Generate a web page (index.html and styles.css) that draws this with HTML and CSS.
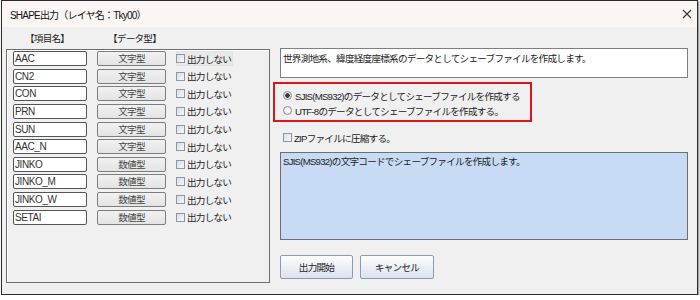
FILE: index.html
```html
<!DOCTYPE html>
<html lang="ja">
  <head>
    <meta charset="UTF-8" />
    <title>SHAPE出力</title>
    <link rel="stylesheet" href="styles.css">
  </head>
  <body>
    <div class="dialog">
      <div class="titlebar">
        <span class="title">SHAPE出力（レイヤ名：Tky00）</span>
        <svg class="close" width="10" height="10" viewBox="0 0 10 10">
          <path d="M1 1 L9 9 M9 1 L1 9" stroke="#333" stroke-width="1.1" fill="none" />
        </svg>
      </div>

      <div class="body">
        <div class="left">
          <div class="heads">
            <span class="head-name">【項目名】</span>
            <span class="head-type">【データ型】</span>
          </div>
          <div class="panel">
            <div class="row">
              <div class="field">AAC</div>
              <div class="type">文字型</div>
              <label class="check focus"><span class="box"></span>出力しない</label>
            </div>
            <div class="row">
              <div class="field">CN2</div>
              <div class="type">文字型</div>
              <label class="check"><span class="box"></span>出力しない</label>
            </div>
            <div class="row">
              <div class="field">CON</div>
              <div class="type">文字型</div>
              <label class="check"><span class="box"></span>出力しない</label>
            </div>
            <div class="row">
              <div class="field">PRN</div>
              <div class="type">文字型</div>
              <label class="check"><span class="box"></span>出力しない</label>
            </div>
            <div class="row">
              <div class="field">SUN</div>
              <div class="type">文字型</div>
              <label class="check"><span class="box"></span>出力しない</label>
            </div>
            <div class="row">
              <div class="field">AAC_N</div>
              <div class="type">文字型</div>
              <label class="check"><span class="box"></span>出力しない</label>
            </div>
            <div class="row">
              <div class="field">JINKO</div>
              <div class="type">数値型</div>
              <label class="check"><span class="box"></span>出力しない</label>
            </div>
            <div class="row">
              <div class="field">JINKO_M</div>
              <div class="type">数値型</div>
              <label class="check"><span class="box"></span>出力しない</label>
            </div>
            <div class="row">
              <div class="field">JINKO_W</div>
              <div class="type">数値型</div>
              <label class="check"><span class="box"></span>出力しない</label>
            </div>
            <div class="row">
              <div class="field">SETAI</div>
              <div class="type">数値型</div>
              <label class="check"><span class="box"></span>出力しない</label>
            </div>
          </div>
        </div>

        <div class="right">
          <div class="desc">世界測地系、緯度経度座標系のデータとしてシェーブファイルを作成します。</div>
          <div class="encoding">
            <label class="radio"><span class="dot checked"></span>SJIS(MS932)のデータとしてシェーブファイルを作成する</label>
            <label class="radio"><span class="dot"></span>UTF-8のデータとしてシェーブファイルを作成する。</label>
          </div>
          <label class="check zip"><span class="box"></span>ZIPファイルに圧縮する。</label>
          <div class="info">SJIS(MS932)の文字コードでシェーブファイルを作成します。</div>
          <div class="buttons">
            <button class="btn start">出力開始</button>
            <button class="btn cancel">キャンセル</button>
          </div>
        </div>
      </div>
    </div>
  </body>
</html>
```

FILE: styles.css
```css
body {
  margin: 0;
  background-color: #ffffff;
  font-family: "Liberation Sans", "Noto Sans CJK JP", sans-serif;
  font-size: 9.6px;
  letter-spacing: -0.75px;
  color: #222;
}
.dialog {
  box-sizing: border-box;
  width: 697px;
  height: 295px;
  margin-left: 1px;
  border: 1px solid #2b2b2b;
  background-color: #f0f0f0;
  box-shadow: 1px 1px 2px rgba(0, 0, 0, 0.5);
}
.titlebar {
  display: flex;
  align-items: center;
  justify-content: space-between;
  height: 26px;
  padding: 0 5px 0 8px;
  background-color: #fbf6f4;
}
.title {
  font-size: 10px;
  letter-spacing: -0.8px;
  color: #111;
}
.body {
  display: flex;
  gap: 3px;
  padding: 0 8px 0 4px;
}
.left {
  width: 264px;
}
.heads {
  display: flex;
  align-items: center;
  height: 22px;
}
.head-name {
  margin-left: 19px;
  width: 83px;
}
.panel {
  box-sizing: border-box;
  height: 234px;
  border: 1px solid #6e6e6e;
  box-shadow: inset 1px 1px 0 #fff;
  padding: 1px 0 0 6px;
  display: flex;
  flex-direction: column;
  gap: 2.65px;
}
.row {
  display: flex;
  align-items: center;
  height: 15px;
}
.field {
  box-sizing: border-box;
  width: 74px;
  height: 15px;
  line-height: 13px;
  padding-left: 1px;
  background-color: #fff;
  border: 1px solid #555;
  border-radius: 2px;
  color: #333;
  font-size: 10px;
  letter-spacing: -0.4px;
}
.type {
  box-sizing: border-box;
  width: 69px;
  height: 15px;
  line-height: 13px;
  margin-left: 10px;
  text-align: center;
  background: linear-gradient(#f1f1f1, #e4e4e4);
  border: 1px solid #7d7d7d;
  border-radius: 2px;
  color: #444;
}
.check {
  display: flex;
  align-items: center;
  height: 15px;
  margin-left: 10px;
  padding-right: 2px;
}
.check.focus {
  background-color: #e9e9e9;
  box-shadow: inset 0 0 0 1px #e2e2e2;
}
.box {
  box-sizing: border-box;
  width: 9px;
  height: 9px;
  margin-right: 2px;
  border: 1px solid #8d96a3;
  background: linear-gradient(135deg, #d8dee7, #f6f8fb);
}
.right {
  width: 415px;
  display: flex;
  flex-direction: column;
}
.desc {
  box-sizing: border-box;
  width: 408px;
  height: 30px;
  margin: 21px 0 0 7px;
  padding: 2px 2px;
  background-color: #fff;
  border: 1px solid #7f7f7f;
}
.encoding {
  box-sizing: border-box;
  width: 259px;
  height: 40px;
  margin-top: 4px;
  padding: 4px 0 0 8px;
  border: 2px solid #e0141c;
}
.radio {
  display: flex;
  align-items: center;
  height: 15px;
}
.dot {
  box-sizing: border-box;
  width: 9px;
  height: 9px;
  margin-right: 3px;
  border: 1px solid #8b8b8b;
  border-radius: 50%;
  background: radial-gradient(circle, #ffffff, #e4e4e4);
}
.dot.checked {
  background: radial-gradient(circle, #3a3a3a 0 2px, #e8e8e8 2.5px);
}
.zip {
  margin: 8px 0 0 10px;
}
.info {
  box-sizing: border-box;
  width: 408px;
  height: 88px;
  margin: 7px 0 0 7px;
  padding: 1px 2px;
  background-color: #c8dbf4;
  border: 1px solid #6f6f6f;
}
.buttons {
  display: flex;
  gap: 7px;
  margin: 15px 0 0 7px;
}
.btn {
  box-sizing: border-box;
  height: 24px;
  font: inherit;
  letter-spacing: inherit;
  color: #222;
  background: linear-gradient(#fdfdfd, #dbe3ee);
  border: 1px solid #8c9bb1;
  border-radius: 2px;
}
.start {
  width: 73px;
}
.cancel {
  width: 74px;
}
```
